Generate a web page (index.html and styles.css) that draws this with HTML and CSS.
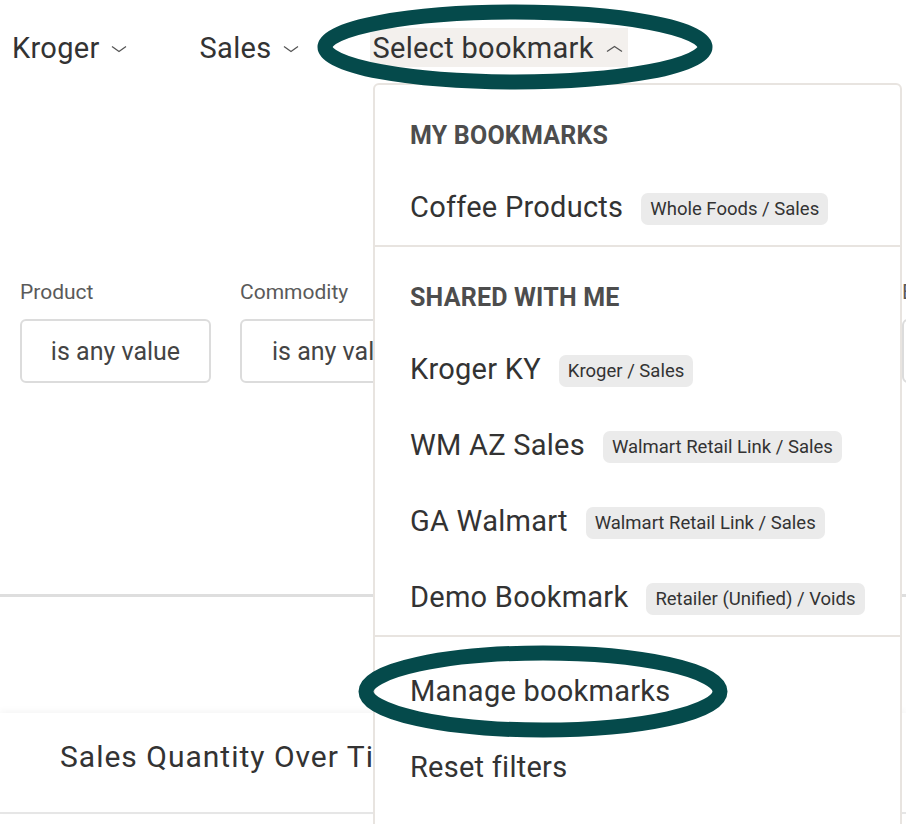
FILE: index.html
```html
<!DOCTYPE html>
<html lang="en">
<head>
<meta charset="utf-8">
<title>Bookmarks</title>
<link rel="stylesheet" href="styles.css">
</head>
<body>
<div class="page">
  <nav class="topnav">
    <div class="nav-item nav-kroger">
      <span>Kroger</span>
      <svg class="chev" width="16" height="8" viewBox="0 0 16 8"><polyline points="1,1.5 8,6.5 15,1.5"/></svg>
    </div>
    <div class="nav-item nav-sales">
      <span>Sales</span>
      <svg class="chev" width="16" height="8" viewBox="0 0 16 8"><polyline points="1,1.5 8,6.5 15,1.5"/></svg>
    </div>
    <div class="nav-item nav-bookmark">
      <span>Select bookmark</span>
      <svg class="chev" width="17" height="8" viewBox="0 0 17 8"><polyline points="1,6.5 8.5,1.5 16,6.5"/></svg>
    </div>
  </nav>

  <section class="filters">
    <div class="filter">
      <div class="filter-label">Product</div>
      <div class="filter-box">is any value</div>
    </div>
    <div class="filter filter-wide">
      <div class="filter-label">Commodity</div>
      <div class="filter-box filter-box-left">is any value</div>
    </div>
    <div class="filter">
      <div class="filter-label">Brand</div>
      <div class="filter-box">is any value</div>
    </div>
  </section>

  <div class="rule"></div>

  <section class="card">
    <h2 class="card-title">Sales Quantity Over Time</h2>
  </section>

  <div class="menu">
    <div class="menu-section">
      <div class="menu-header">MY BOOKMARKS</div>
      <div class="menu-item"><span class="item-name">Coffee Products</span><span class="tag">Whole Foods / Sales</span></div>
    </div>
    <div class="menu-section">
      <div class="menu-header">SHARED WITH ME</div>
      <div class="menu-item"><span class="item-name">Kroger KY</span><span class="tag">Kroger / Sales</span></div>
      <div class="menu-item"><span class="item-name">WM AZ Sales</span><span class="tag">Walmart Retail Link / Sales</span></div>
      <div class="menu-item"><span class="item-name">GA Walmart</span><span class="tag">Walmart Retail Link / Sales</span></div>
      <div class="menu-item"><span class="item-name">Demo Bookmark</span><span class="tag">Retailer (Unified) / Voids</span></div>
    </div>
    <div class="menu-section menu-last">
      <div class="menu-item"><span class="item-name">Manage bookmarks</span></div>
      <div class="menu-item"><span class="item-name">Reset filters</span></div>
    </div>
  </div>

  <svg class="annotations" width="906" height="824" viewBox="0 0 906 824">
    <ellipse cx="515" cy="47" rx="190" ry="35"/>
    <ellipse cx="543" cy="691.5" rx="177" ry="38.5"/>
  </svg>
</div>
</body>
</html>
```

FILE: styles.css
```css
* { box-sizing: border-box; }

html, body {
  margin: 0;
  padding: 0;
  background: #ffffff;
}

body {
  font-family: Roboto, "Liberation Sans", sans-serif;
  color: #333333;
  width: 906px;
  height: 824px;
  overflow: hidden;
}

.page {
  position: relative;
  width: 906px;
  height: 824px;
  overflow: hidden;
}

/* top navigation */
.topnav {
  display: flex;
  align-items: center;
  padding: 28px 0 0 12px;
  height: 67px;
}

.nav-item {
  display: flex;
  align-items: center;
  gap: 11px;
  height: 39px;
  font-size: 29px;
  letter-spacing: 0.3px;
  color: #333333;
  white-space: nowrap;
}

.nav-sales { margin-left: 73px; gap: 12px; }

.nav-bookmark {
  margin-left: 71px;
  background: #f3f0ed;
  padding: 0 5px 0 2px;
  gap: 12px;
}

.chev {
  fill: none;
  stroke: #555555;
  stroke-width: 1.3;
  margin-top: 2px;
}

/* filters */
.filters {
  display: flex;
  gap: 29px;
  padding-left: 20px;
  margin-top: 213px;
}

.filter { width: 191px; flex: none; }
.filter-wide { width: 633px; }

.filter-label {
  font-size: 21px;
  line-height: 24px;
  color: #5a5a5a;
  margin-bottom: 15px;
  white-space: nowrap;
}

.filter-box {
  height: 64px;
  border: 2px solid #dcdcdc;
  border-radius: 6px;
  display: flex;
  align-items: center;
  justify-content: center;
  font-size: 25px;
  color: #444444;
  white-space: nowrap;
}

.filter-box-left {
  justify-content: flex-start;
  padding-left: 30px;
}

.rule {
  margin-top: 211px;
  height: 3px;
  background: #dedede;
}

/* card */
.card {
  margin-top: 116px;
  height: 101px;
  border-bottom: 2px solid #e6e6e6;
  box-shadow: 0 -3px 6px rgba(0, 0, 0, 0.035);
  padding: 27px 0 0 60px;
}

.card-title {
  margin: 0;
  font-weight: 400;
  font-size: 30px;
  line-height: 34px;
  letter-spacing: 1px;
  color: #333333;
  white-space: nowrap;
}

/* dropdown menu */
.menu {
  position: absolute;
  left: 373px;
  top: 83px;
  width: 529px;
  height: 800px;
  background: #ffffff;
  border: 2px solid #e8e4e0;
  border-radius: 6px;
  z-index: 5;
}

.menu-section {
  padding: 16px 0 0 35px;
  border-bottom: 2px solid #e8e4e0;
}

.menu-last { border-bottom: none; }

.menu-header {
  height: 68px;
  display: flex;
  align-items: center;
  font-size: 25px;
  font-weight: 700;
  color: #4d4d4d;
  letter-spacing: 0.2px;
}

.menu-item {
  height: 76px;
  display: flex;
  align-items: center;
  gap: 18px;
  white-space: nowrap;
}

.item-name {
  font-size: 29px;
  letter-spacing: 0.25px;
  color: #333333;
}

.tag {
  font-size: 18.5px;
  line-height: 22px;
  padding: 5px 9px;
  background: #ebebeb;
  border-radius: 7px;
  color: #333333;
  margin-top: 3px;
}

/* annotation overlay */
.annotations {
  position: absolute;
  left: 0;
  top: 0;
  z-index: 10;
  pointer-events: none;
}

.annotations ellipse {
  fill: none;
  stroke: #054a4b;
  stroke-width: 15;
}
```
